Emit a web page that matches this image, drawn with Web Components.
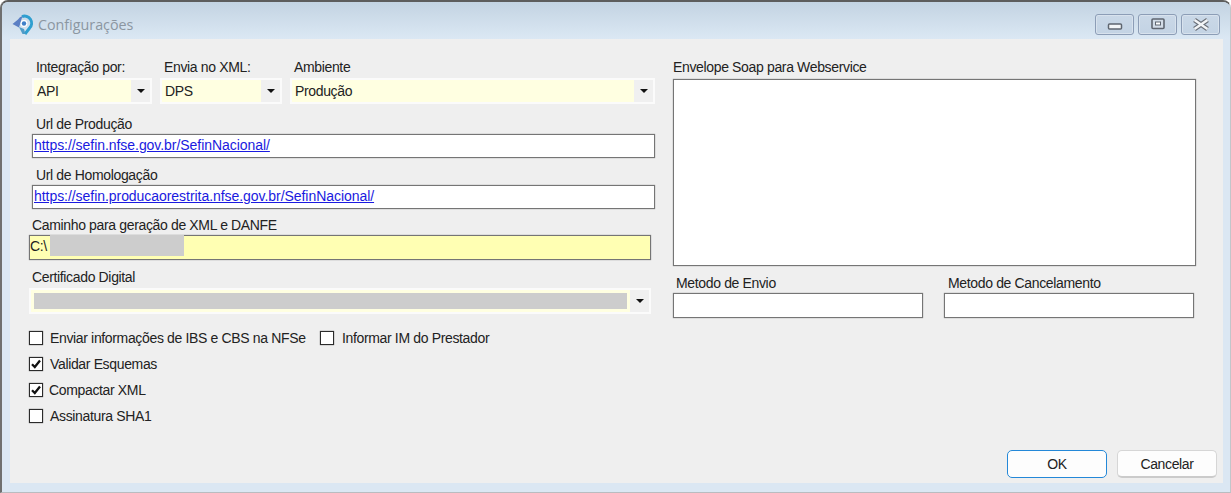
<!DOCTYPE html>
<html lang="pt-BR">
<head>
<meta charset="utf-8">
<title>Configurações</title>
<style>
  html, body { margin: 0; padding: 0; background: #fff; }
  body { font: 14px "Liberation Sans", Arial, sans-serif; letter-spacing: -0.35px; color: #222; }
</style>
</head>
<body>
<config-dialog></config-dialog>

<script>
class TitleButton extends HTMLElement {
  connectedCallback() {
    const kind = this.getAttribute("kind");
    const glyphs = {
      min: `<rect x="3.5" y="6" width="13" height="5" rx="1" fill="#f4f6f8" stroke="#5f6670" stroke-width="1.5"/>`,
      max: `<rect x="4" y="1" width="12" height="9.5" rx="1" fill="#d3dde8" stroke="#5f6670" stroke-width="1.6"/><rect x="7.5" y="4" width="5" height="3" fill="#fff" stroke="#5f6670"/>`,
      close: `<path d="M3.5 2 L16.5 11 M16.5 2 L3.5 11" stroke="#6b7079" stroke-width="4.6"/><path d="M3.5 2 L16.5 11 M16.5 2 L3.5 11" stroke="#f2f4f6" stroke-width="2.4"/>`,
    };
    this.attachShadow({ mode: "open" }).innerHTML = `
      <style>
        :host {
          display: flex;
          align-items: center;
          justify-content: center;
          width: 39px;
          height: 21px;
          box-sizing: border-box;
          border: 1px solid #8c9db6;
          border-radius: 3px;
          background: linear-gradient(#cad8e7, #c3d3e4);
          box-shadow: inset 0 0 0 1px #d8e2ed;
        }
        svg { display: block; }
      </style>
      <svg width="20" height="13" viewBox="0 0 20 13">${glyphs[kind] || ""}</svg>
    `;
  }
}

class WinField extends HTMLElement {
  connectedCallback() {
    const label = this.getAttribute("label") || "";
    const indent = this.getAttribute("indent") || "0";
    const gap = this.getAttribute("gap") || "2";
    this.attachShadow({ mode: "open" }).innerHTML = `
      <style>
        :host { display: block; }
        .label {
          height: 16px;
          line-height: 16px;
          margin: 0 0 ${gap}px ${indent}px;
          white-space: nowrap;
        }
      </style>
      <div class="label">${label}</div>
      <slot></slot>
    `;
  }
}

class WinInput extends HTMLElement {
  connectedCallback() {
    this.attachShadow({ mode: "open" }).innerHTML = `
      <style>
        :host {
          display: block;
          position: relative;
          box-sizing: border-box;
          height: var(--h, 25px);
          border: 1px solid #757575;
          box-shadow: 0 0 1px #8a8a8a;
          background: var(--bg, #fff);
          line-height: 20px;
          padding-left: var(--pad, 1px);
          white-space: nowrap;
          overflow: hidden;
        }
        ::slotted(a) { color: #1a1ae0; text-decoration: underline; letter-spacing: -0.05px; }
      </style>
      <slot></slot>
    `;
  }
}

class WinCombo extends HTMLElement {
  connectedCallback() {
    this.attachShadow({ mode: "open" }).innerHTML = `
      <style>
        :host {
          display: flex;
          position: relative;
          box-sizing: border-box;
          height: 26px;
          border: 2px solid #fbfbfb;
          background: #f0f0f0;
        }
        .value {
          flex: 1;
          min-width: 0;
          background: #ffffe1;
          line-height: 22px;
          padding-left: 3px;
          white-space: nowrap;
          overflow: hidden;
        }
        .arrow {
          flex: none;
          width: 19px;
          display: flex;
          align-items: center;
          justify-content: center;
        }
        .arrow i {
          width: 0;
          height: 0;
          border: 4px solid transparent;
          border-top: 4px solid #111;
          border-bottom: 0;
        }
      </style>
      <div class="value"><slot></slot></div>
      <div class="arrow"><i></i></div>
    `;
  }
}

class WinCheck extends HTMLElement {
  connectedCallback() {
    const checked = this.hasAttribute("checked");
    this.attachShadow({ mode: "open" }).innerHTML = `
      <style>
        :host {
          display: inline-flex;
          align-items: center;
          height: 26px;
          gap: var(--check-gap, 7px);
          white-space: nowrap;
        }
        .box {
          flex: none;
          width: 14px;
          height: 14px;
          box-sizing: border-box;
          border: 1px solid #2b2b2b;
          box-shadow: 0 0 1px #555;
          background: #fff;
        }
        svg { display: block; }
      </style>
      <span class="box">
        ${checked ? `<svg width="12" height="12" viewBox="0 0 12 12"><path d="M2 6.2 L4.8 9 L10 2.6" fill="none" stroke="#111" stroke-width="2.3"/></svg>` : ""}
      </span>
      <slot></slot>
    `;
  }
}

class WinButton extends HTMLElement {
  connectedCallback() {
    const primary = this.hasAttribute("primary");
    this.attachShadow({ mode: "open" }).innerHTML = `
      <style>
        :host {
          display: flex;
          align-items: center;
          justify-content: center;
          width: 100px;
          height: 28px;
          box-sizing: border-box;
          border-radius: 5px;
          background: #fdfdfd;
          border: ${primary ? "1.5px solid #2488d8" : "1px solid #d6d6d6"};
          ${primary ? "" : "border-bottom: 2px solid #cbcbcb;"}
        }
      </style>
      <slot></slot>
    `;
  }
}

class ConfigDialog extends HTMLElement {
  connectedCallback() {
    this.attachShadow({ mode: "open" }).innerHTML = `
      <style>
        :host {
          display: block;
          width: 1231px;
          height: 493px;
          box-sizing: border-box;
          overflow: hidden;
          border: 1px solid #6f6f6f;
          border-top: 2px solid #5d5d5d;
          border-left-width: 2px;
          border-bottom-color: #b9bcc0;
          border-right-color: #c2c6ca;
          border-radius: 8px 8px 0 0;
          background: #dbe7f3;
        }
        .titlebar {
          display: flex;
          align-items: center;
          height: 37px;
          box-sizing: border-box;
          padding: 7px 10px 0 10px;
          background: linear-gradient(#c3d3e2, #dbe8f4);
        }
        .titlebar h1 {
          margin: 0 0 0 4px;
          font: 400 14.3px "Open Sans", "Noto Sans", sans-serif;
          letter-spacing: 0;
          color: #8b96a1;
        }
        .titlebuttons {
          display: flex;
          gap: 4px;
          margin-left: auto;
        }
        .panel {
          display: flex;
          height: 444px;
          width: 1213px;
          margin-left: 8px;
          box-sizing: border-box;
          background: #efefef;
          position: relative;
        }
        .left {
          flex: none;
          width: 663px;
          padding: 20px 0 0 19px;
          box-sizing: border-box;
        }
        .combos {
          display: flex;
          gap: 8px;
          margin-left: 3px;
        }
        .url { margin-left: 3px; width: 623px; --h: 24px; }
        .checks {
          display: grid;
          grid-template-columns: 291px auto;
          justify-content: start;
          margin-top: 11px;
        }
        .redact { position: absolute; background: #cdcdcd; }
        .right {
          flex: none;
          width: 523px;
          padding-top: 20px;
        }
        .soap { --h: 187px; }
        .methods {
          display: flex;
          justify-content: space-between;
          width: 521px;
          margin-top: 9px;
        }
        .methods win-field { width: 250px; }
        .actions {
          position: absolute;
          right: 6px;
          bottom: 5px;
          display: flex;
          gap: 10px;
        }
        .rel { position: relative; }
      </style>

      <header class="titlebar">
        <svg width="22" height="24" viewBox="0 0 22 24" aria-hidden="true">
          <path d="M10 4.6 A7 7 0 0 1 17.6 16 L13 22" fill="none" stroke="#2f9fd0" stroke-width="3"/>
          <path d="M10.5 4 A8 8 0 0 0 6 7.4 L0.5 12 L7 15.5 Z" fill="#5b7fc4"/>
          <circle cx="12" cy="11.5" r="3.4" fill="#fff"/>
          <circle cx="12" cy="11.5" r="2.2" fill="#3f7fc8"/>
          <path d="M7 15 L10.5 22 L13.5 22 L12 17 Z" fill="#4f9cc8"/>
        </svg>
        <h1>Configurações</h1>
        <div class="titlebuttons">
          <title-button kind="min"></title-button>
          <title-button kind="max"></title-button>
          <title-button kind="close"></title-button>
        </div>
      </header>

      <main class="panel">
        <section class="left">
          <div class="combos">
            <win-field label="Integração por:" indent="4" gap="3" style="width:120px">
              <win-combo>API</win-combo>
            </win-field>
            <win-field label="Envia no XML:" indent="4" gap="3" style="width:122px">
              <win-combo>DPS</win-combo>
            </win-field>
            <win-field label="Ambiente" indent="4" gap="3" style="width:365px">
              <win-combo>Produção</win-combo>
            </win-field>
          </div>

          <win-field class="url" label="Url de Produção" indent="4" style="margin-top:12px">
            <win-input><a>https://sefin.nfse.gov.br/SefinNacional/</a></win-input>
          </win-field>
          <win-field class="url" label="Url de Homologação" indent="4" style="margin-top:9px">
            <win-input><a>https://sefin.producaorestrita.nfse.gov.br/SefinNacional/</a></win-input>
          </win-field>
          <win-field label="Caminho para geração de XML e DANFE" indent="3" style="margin-top:8px;width:622px">
            <div class="rel">
              <win-input style="--bg:#ffffb3;--pad:0">C:\\</win-input>
              <div class="redact" style="left:21px;top:0;width:134px;height:21px"></div>
            </div>
          </win-field>
          <win-field label="Certificado Digital" indent="3" gap="3" style="margin-top:9px;width:622px">
            <div class="rel">
              <win-combo></win-combo>
              <div class="redact" style="left:5px;top:5px;width:593px;height:16px"></div>
            </div>
          </win-field>

          <div class="checks">
            <win-check>Enviar informações de IBS e CBS na NFSe</win-check>
            <win-check style="--check-gap:8px">Informar IM do Prestador</win-check>
            <win-check checked style="grid-column:1">Validar Esquemas</win-check>
            <win-check checked style="grid-column:1;--check-gap:6px">Compactar XML</win-check>
            <win-check style="grid-column:1">Assinatura SHA1</win-check>
          </div>
        </section>

        <section class="right">
          <win-field label="Envelope Soap para Webservice" gap="4">
            <win-input class="soap"></win-input>
          </win-field>
          <div class="methods">
            <win-field label="Metodo de Envio" indent="3" gap="2">
              <win-input></win-input>
            </win-field>
            <win-field label="Metodo de Cancelamento" indent="4" gap="2">
              <win-input></win-input>
            </win-field>
          </div>
        </section>

        <div class="actions">
          <win-button primary>OK</win-button>
          <win-button>Cancelar</win-button>
        </div>
      </main>
    `;
  }
}

customElements.define("title-button", TitleButton);
customElements.define("win-field", WinField);
customElements.define("win-input", WinInput);
customElements.define("win-combo", WinCombo);
customElements.define("win-check", WinCheck);
customElements.define("win-button", WinButton);
customElements.define("config-dialog", ConfigDialog);
</script>
</body>
</html>
